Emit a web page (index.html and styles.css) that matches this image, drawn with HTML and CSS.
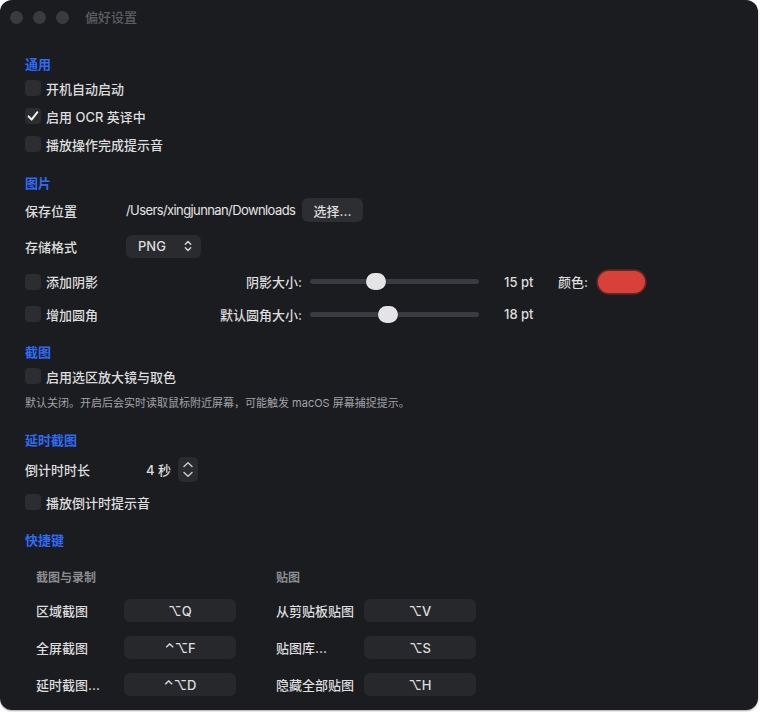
FILE: index.html
```html
<!DOCTYPE html>
<html lang="zh-CN">
<head>
<meta charset="utf-8">
<title>偏好设置</title>
<link rel="stylesheet" href="styles.css">
</head>
<body>
<div class="window">
  <div class="titlebar">
    <div class="lights"><span class="light"></span><span class="light"></span><span class="light"></span></div>
    <div class="title">偏好设置</div>
  </div>
  <div class="content">
    <section class="section">
      <div class="section-title">通用</div>
      <div class="row"><span class="cb"></span><span class="label">开机自动启动</span></div>
      <div class="row"><span class="cb"><svg class="check" viewBox="0 0 16 16"><path d="M3.6 8.4 L6.6 11.6 L12.4 4.2" fill="none" stroke="#f2f2f2" stroke-width="2" stroke-linecap="round" stroke-linejoin="round"/></svg></span><span class="label">启用 OCR 英译中</span></div>
      <div class="row"><span class="cb"></span><span class="label">播放操作完成提示音</span></div>
    </section>

    <section class="section gap-15">
      <div class="section-title">图片</div>
      <div class="row h34"><span class="field-label">保存位置</span><span class="path">/Users/xingjunnan/Downloads</span><span class="btn">选择...</span></div>
      <div class="row h38"><span class="field-label">存储格式</span><span class="popup"><span class="popup-text">PNG</span><svg class="updown" viewBox="0 0 8 12"><path d="M1.3 4.3 L4 1.6 L6.7 4.3 M1.3 7.7 L4 10.4 L6.7 7.7" fill="none" stroke="#d8d8d8" stroke-width="1.4" stroke-linecap="round" stroke-linejoin="round"/></svg></span></div>
      <div class="row h33">
        <div class="lead"><span class="check-item"><span class="cb"></span><span class="label">添加阴影</span></span><span class="slabel">阴影大小:</span></div>
        <div class="slider"><div class="track"></div><div class="thumb" style="left:56px"></div></div>
        <span class="value">15 pt</span>
        <span class="clabel">颜色:</span>
        <span class="swatch"></span>
      </div>
      <div class="row h32">
        <div class="lead"><span class="check-item"><span class="cb"></span><span class="label">增加圆角</span></span><span class="slabel">默认圆角大小:</span></div>
        <div class="slider"><div class="track"></div><div class="thumb" style="left:68px"></div></div>
        <span class="value">18 pt</span>
      </div>
    </section>

    <section class="section gap-12">
      <div class="section-title">截图</div>
      <div class="row"><span class="cb"></span><span class="label">启用选区放大镜与取色</span></div>
      <div class="desc">默认关闭。开启后会实时读取鼠标附近屏幕，可能触发 macOS 屏幕捕捉提示。</div>
    </section>

    <section class="section gap-14">
      <div class="section-title">延时截图</div>
      <div class="row h38"><span class="field-label wide">倒计时时长</span><span class="count">4 秒</span><span class="stepper"><svg viewBox="0 0 20 25"><path d="M6 9.5 L10 5.8 L14 9.5 M6 15.5 L10 19.2 L14 15.5" fill="none" stroke="#cfcfcf" stroke-width="1.4" stroke-linecap="round" stroke-linejoin="round"/></svg></span></div>
      <div class="row"><span class="cb"></span><span class="label">播放倒计时提示音</span></div>
    </section>

    <section class="section gap-14">
      <div class="section-title">快捷键</div>
      <div class="shortcuts">
        <div class="sub">截图与录制</div><div></div><div></div><div class="sub">贴图</div><div></div>
        <div class="sk-label">区域截图</div><div class="key">⌥Q</div><div></div><div class="sk-label">从剪贴板贴图</div><div class="key">⌥V</div>
        <div class="sk-label">全屏截图</div><div class="key">⌃⌥F</div><div></div><div class="sk-label">贴图库...</div><div class="key">⌥S</div>
        <div class="sk-label">延时截图...</div><div class="key">⌃⌥D</div><div></div><div class="sk-label">隐藏全部贴图</div><div class="key">⌥H</div>
        <div></div><div class="key"></div><div></div><div></div><div></div>
      </div>
    </section>
  </div>
</div>
</body>
</html>
```

FILE: styles.css
```css
* { box-sizing: border-box; }
html, body { margin: 0; padding: 0; }
body {
  background: #ffffff;
  width: 760px;
  height: 712px;
  overflow: hidden;
  font-family: "Inter", "Noto Sans CJK SC", sans-serif;
  font-size: 13px;
  color: #dedede;
}
.window {
  width: 758px;
  height: 710px;
  background: #1b1c20;
  border-radius: 12px;
  overflow: hidden;
  box-shadow: 0 1px 2px rgba(0,0,0,0.35);
}
.titlebar {
  height: 33px;
  display: flex;
  align-items: center;
  padding-left: 10px;
}
.lights { display: flex; gap: 10px; margin-top: 1px; }
.light {
  width: 13px; height: 13px;
  border-radius: 50%;
  background: #3a3b3f;
}
.title {
  margin-left: 16px;
  color: #5c5d61;
  font-size: 13px;
  font-weight: 500;
}
.content { padding: 21px 0 0 25px; }
.gap-15 { margin-top: 15px; }
.gap-12 { margin-top: 12px; }
.gap-14 { margin-top: 14px; }
.section-title {
  height: 20px;
  line-height: 20px;
  color: #2f6af5;
  font-weight: 700;
  font-size: 13px;
}
.row {
  height: 28px;
  display: flex;
  align-items: center;
}
.h34 { height: 34px; }
.h38 { height: 38px; }
.h33 { height: 33px; }
.h32 { height: 32px; }
.cb {
  width: 16px; height: 16px;
  border-radius: 4px;
  background: #2c2d31;
  flex: none;
  display: flex;
  align-items: center;
  justify-content: center;
}
.check { width: 16px; height: 16px; }
.label { margin-left: 5px; font-weight: 500; }
.check-item { display: flex; align-items: center; }
.field-label { width: 101px; font-weight: 500; flex: none; }
.field-label.wide { width: 121px; }
.path { color: #e4e4e4; width: 167px; letter-spacing: -0.6px; white-space: nowrap; }
.btn {
  margin-left: 9px;
  width: 61px; height: 24px;
  border-radius: 6px;
  background: #2d2e32;
  display: flex; align-items: center; justify-content: center;
  font-weight: 500;
}
.popup {
  width: 75px; height: 23px;
  border-radius: 6px;
  background: #2a2b2f;
  display: flex; align-items: center;
  padding-left: 12px;
  font-weight: 500;
}
.popup-text { width: 46px; }
.updown { width: 8px; height: 12px; }
.lead {
  width: 277px;
  display: flex;
  align-items: center;
  justify-content: space-between;
  flex: none;
}
.slabel { font-weight: 500; }
.slider {
  position: relative;
  margin-left: 8px;
  width: 169px;
  height: 17px;
  display: flex;
  align-items: center;
  flex: none;
}
.track {
  width: 100%;
  height: 5px;
  border-radius: 3px;
  background: #3a3b40;
}
.thumb {
  position: absolute;
  top: 0;
  width: 20px; height: 17px;
  border-radius: 9px;
  background: #e4e4e6;
  box-shadow: 0 0 1px rgba(0,0,0,0.5);
}
.value { margin-left: 25px; width: 54px; font-weight: 500; }
.clabel { width: 40px; font-weight: 500; }
.swatch {
  width: 47px; height: 22px;
  border-radius: 11px;
  background: #d8403a;
  box-shadow: 0 0 0 1.5px #6a2623, 0 0 3px rgba(200,60,50,0.6);
}
.desc {
  height: 26px;
  line-height: 26px;
  font-size: 11px;
  color: #a2a3a7;
}
.count { width: 32px; font-weight: 500; }
.stepper {
  width: 20px; height: 25px;
  border-radius: 5px;
  background: #2a2b2f;
  display: flex;
}
.stepper svg { width: 20px; height: 25px; }
.shortcuts {
  margin-top: 16px;
  padding-left: 11px;
  display: grid;
  grid-template-columns: 88px 112px 40px 88px 112px;
  grid-template-rows: 20px repeat(4, 37px);
  align-items: center;
}
.shortcuts .sub {
  font-size: 12px;
  font-weight: 600;
  color: #8c8d91;
}
.shortcuts > :nth-child(n+6) { position: relative; top: 6px; }
.sk-label { font-weight: 500; }
.key {
  height: 23px;
  border-radius: 6px;
  background: #27282c;
  display: flex; align-items: center; justify-content: center;
  font-weight: 500;
  font-family: "Inter", "DejaVu Sans", "Noto Sans CJK SC", sans-serif;
}
```
